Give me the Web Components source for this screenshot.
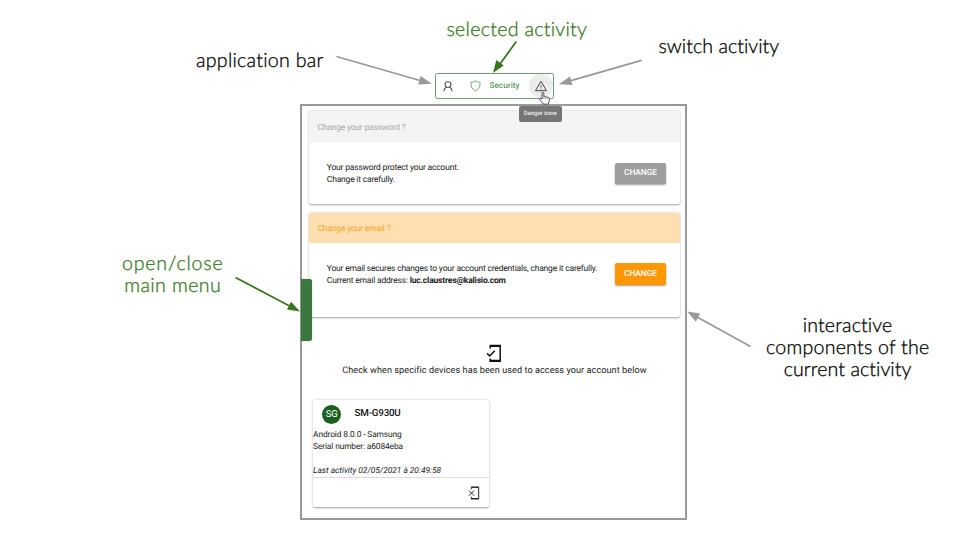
<!DOCTYPE html>
<html lang="en"><head><meta charset="utf-8"><title>Account activity</title>
<style>html,body{margin:0;background:#fff}body{width:960px;height:540px;overflow:hidden;font-family:Roboto,"Liberation Sans",sans-serif;text-rendering:geometricPrecision}</style></head>
<body><guide-page></guide-page>
<script>
const define=(name,html,ready)=>customElements.define(name,class extends HTMLElement{
 constructor(){super();this.attachShadow({mode:'open'}).innerHTML=html;}
 connectedCallback(){if(ready)ready.call(this,this.shadowRoot);}
});
// Text line whose tracking is adjusted to fill the width given in "w".
define('fit-line','<style>:host{display:block;white-space:nowrap}span{display:inline-block}</style><span><slot></slot></span>',function(r){
 const s=r.querySelector('span'),w=+this.getAttribute('w');
 const n=r.querySelector('slot').assignedNodes({flatten:true}).map(t=>t.textContent).join('').length;
 this.style.width=w+'px';
 if(n)s.style.letterSpacing=((w-s.getBoundingClientRect().width)/n)+'px';
});
define('raised-button',`<style>:host{display:flex;box-sizing:border-box;width:51px;height:21.5px;justify-content:center;align-items:center;border-radius:2px;background:var(--tone);color:#fff;font-weight:500;font-size:8.4px;line-height:12px;box-shadow:0 1px 2px #0006}</style><fit-line w="33"><slot></slot></fit-line>`);
define('setting-card',`<style>
:host{display:block;border-radius:2.5px;background:#fff;box-shadow:0 .5px 2.5px #0004,0 1px 1px #0002}
header{display:flex;align-items:center;box-sizing:border-box;height:var(--head);padding:1.6px 9px 0;background:var(--tint);color:var(--ink);border-radius:2.5px 2.5px 0 0}
section{display:flex;justify-content:space-between;align-items:flex-start;box-sizing:border-box;height:var(--body);padding:19.1px 14px 0 18.3px;color:#1a1a1a}
raised-button{margin-top:.9px}
</style><header><slot name="title"></slot></header><section><div><slot></slot></div><raised-button>CHANGE</raised-button></section>`);
define('activity-bar',`<style>
:host{display:grid;grid-template-columns:26px 28px 51px 1fr;align-items:center;box-sizing:border-box;border:1px solid #6b9d70;border-radius:2.5px;background:#fff;color:#5f9a67;font-size:8.2px;font-weight:500}
svg{display:block;overflow:visible}.user{margin-left:7px}
fit-line{margin-top:-1px}
.shield{margin-left:8.7px}
.hot{width:24px;height:24px;border-radius:50%;background:#ececec;display:grid;place-items:center;margin-left:-12px}
</style>
<svg class="user" width="10" height="11" viewBox="0 0 10 11" fill="none" stroke="#555" stroke-width="1.1"><circle cx="5" cy="3.6" r="2.9"/><path d="M3.4 6C1.7 6.8 1 8 .9 10.3M6.6 6C8.3 6.8 9 8 9.1 10.3"/></svg>
<svg class="shield" width="11" height="12" viewBox="0 0 11 12" fill="none" stroke="#64a06c" stroke-width=".9"><path d="M5.5 .9C4.3 1.8 2.9 2.2 .9 2.3C.8 6.7 2 9.2 5.5 10.8C9 9.2 10.2 6.7 10.1 2.3C8.1 2.2 6.7 1.8 5.5 .9Z"/></svg>
<fit-line w="30">Security</fit-line>
<div class="hot"><svg width="12" height="11" viewBox="0 0 12 11" fill="none" stroke="#484848" stroke-width="1"><path d="M6 .2L11.5 9.7H.5Z"/><path d="M6 3.7V6.7M6 7.7V8.7" stroke-width=".8"/></svg></div>`);
define('device-card',`<style>
:host{display:flex;flex-direction:column;box-sizing:border-box;border-radius:2px;background:#fff;box-shadow:0 .5px 2.5px #0004,0 1px 1px #0002;color:#222;font-size:8.4px;line-height:12px}
header{display:flex;align-items:center;height:28px}.avatar{display:grid;place-items:center;width:19px;height:19px;border-radius:50%;background:#1b5e20;color:#fff;font-size:9.6px;margin-left:9.2px}
.avatar fit-line{margin-top:.6px}
.name{font-size:9.8px;font-weight:500;margin-left:13.3px;color:#111;margin-top:-.6px}
.body{height:48.3px;padding-top:.6px}.last{font-style:italic;margin-top:12px}
footer{border-top:1px solid #ddd;flex:1;display:flex;align-items:center;justify-content:flex-end;padding-right:9px}
svg{display:block}
</style><header><div class="avatar"><fit-line w="12">SG</fit-line></div><fit-line class="name" w="46">SM-G930U</fit-line></header>
<div class="body"><fit-line w="88.5">Android 8.0.0 - Samsung</fit-line><fit-line w="89.8">Serial number: a6084eba</fit-line><fit-line class="last" w="128">Last activity 02/05/2021 à 20:49:58</fit-line></div>
<footer><svg width="12" height="14" viewBox="0 0 12 14" fill="none" stroke="#292929" stroke-width="1"><path d="M3.3 3.2V1.4H10.7V12.5H3.3V10.7"/><path d="M3 1H11M3 12.8H11" stroke-width="1.2"/><path d="M1 4.7L6 9.7M6 4.7L1 9.7"/></svg></footer>`);
define('activity-panel',`<style>
:host{display:block;box-sizing:border-box;border:2px solid #999;background:#fff;padding:5.6px 5px 0 7px;font-size:8.5px;line-height:12px}
.pw{--head:31.5px;--body:61.2px;--tint:#f4f4f4;--ink:#aaa;--tone:#9e9e9e}
.mail{--head:30.5px;--body:73.6px;--tint:#ffdfb2;--ink:#ffa51f;--tone:#ff9800;margin-top:9.2px}
.devices{display:flex;flex-direction:column;align-items:center;margin-top:27.2px;color:#222;font-size:9.1px}
svg{display:block;margin-bottom:1.8px}
device-card{width:176px;height:106.3px;margin:23.4px 0 0 4.6px}
</style>
<setting-card class="pw"><fit-line slot="title" w="88">Change your password ?</fit-line><fit-line w="132">Your password protect your account.</fit-line><fit-line w="68">Change it carefully.</fit-line></setting-card>
<setting-card class="mail"><fit-line slot="title" w="73">Change your email ?</fit-line><fit-line w="270.5">Your email secures changes to your account credentials, change it carefully.</fit-line><fit-line w="179">Current email address: <b>luc.claustres@kalisio.com</b></fit-line></setting-card>
<div class="devices"><svg width="16" height="19" viewBox="0 0 16 19" fill="none" stroke="#111"><path d="M4.3 4.5V1.8H14.2V17.2H4.3V14.5" stroke-width="1.5"/><path d="M3.8 1.8H14.7M3.8 16.8H14.7" stroke-width="2.3"/><path d="M1.1 9.4L3.7 12L8.8 6.8" stroke-width="1.5"/></svg><fit-line w="304">Check when specific devices has been used to access your account below</fit-line></div>
<device-card></device-card>`);
define('diagram-note',`<style>:host{position:absolute;display:flex;flex-direction:column;align-items:center;font:300 19.6px/22px Lato,sans-serif;color:#000;-webkit-text-stroke:.3px currentColor}</style><slot></slot>`);
define('guide-page',`<style>
:host{display:block;position:relative;width:960px;height:540px}
activity-bar,activity-panel,.handle,.tip,.arrows,.hand{position:absolute}
activity-bar{left:434.5px;top:73px;width:119.5px;height:26px}
activity-panel{left:299.5px;top:103.5px;width:387.5px;height:416.5px}
.handle{left:301px;top:278.5px;width:11.2px;height:62px;border-radius:0 3px 3px 0;background:#3c7740;box-shadow:0 0 1px #3c9742}
.tip{left:518.5px;top:106px;width:43.5px;height:15.5px;border-radius:2px;background:#757575;color:#eee;font-size:6px;font-weight:500;display:grid;place-items:center}
.arrows{inset:0}.hand{left:538px;top:91px}.green{color:#38761d}
</style>
<activity-panel></activity-panel><activity-bar></activity-bar>
<div class="handle"></div><div class="tip"><fit-line w="33">Danger zone</fit-line></div>
<svg class="hand" width="13" height="14" viewBox="0 0 13 14"><path d="M4 8.2V2.3C4 .9 5.8 .9 5.8 2.3V5.6C6.4 5 7.3 5.2 7.6 5.9C8.3 5.4 9.2 5.7 9.4 6.5C10.3 6.1 11.3 6.5 11.3 7.6V9.7C11.3 11.2 10.3 11.8 10.1 13.2H5.2C4.7 11.5 2.8 10.4 1.6 8.5C1 7.4 2.3 6.8 3 7.5Z" fill="#fff" stroke="#4b4b59" stroke-width="1"/><path d="M5.9 6V8M7.7 6.2V8M9.5 6.8V8.2" stroke="#4b4b59" stroke-width=".6"/></svg>
<svg class="arrows" width="960" height="540" stroke-width="1.8"><g stroke="#999" fill="#999"><path d="M336.5 56.5L420 80.5M641.5 60.3L571 80.7M750.5 346.5L697 317"/><path stroke="none" d="M431.8 83.8L418.3 84.4L420.6 76ZM558.8 84.2L570 76.4L572.4 84.9ZM687.2 311.5L700.2 313.6L695.8 321.7Z"/></g><g stroke="#38761d" fill="#38761d"><path d="M516.3 41.5L500 64M235.5 277.5L291 306.7"/><path stroke="none" d="M493 73L496.3 60L503.7 65.5ZM300 311.5L287 309.5L291 301.7Z"/></g></svg>
<diagram-note style="left:196px;top:50px"><fit-line w="128">application bar</fit-line></diagram-note>
<diagram-note class="green" style="left:446.5px;top:18.5px"><fit-line w="141">selected activity</fit-line></diagram-note>
<diagram-note style="left:658.5px;top:36px"><fit-line w="121">switch activity</fit-line></diagram-note>
<diagram-note class="green" style="left:122px;top:253px"><fit-line w="101.5">open/close</fit-line><fit-line w="97">main menu</fit-line></diagram-note>
<diagram-note style="left:766px;top:314.5px"><fit-line w="90">interactive</fit-line><fit-line w="163.5">components of the</fit-line><fit-line w="128">current activity</fit-line></diagram-note>`);
</script>
</body></html>
